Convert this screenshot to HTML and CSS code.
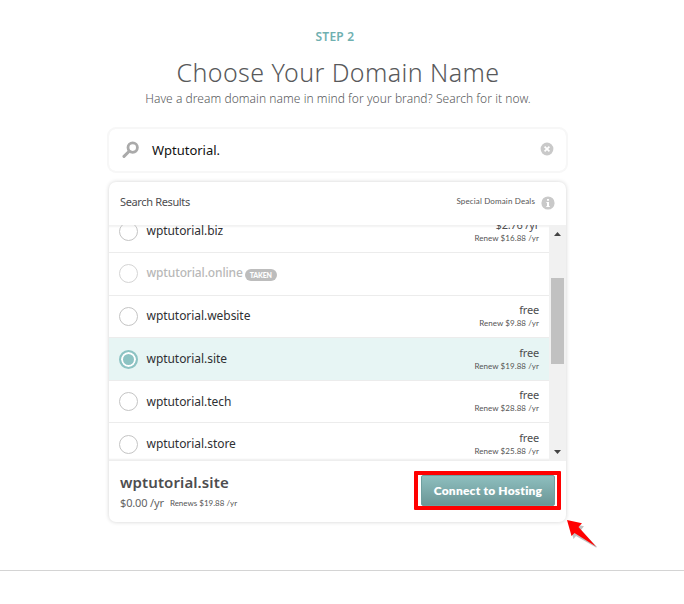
FILE: index.html
```html
<!DOCTYPE html>
<html lang="en">
<head>
<meta charset="utf-8">
<title>Choose Your Domain Name</title>
<link rel="stylesheet" href="styles.css">
</head>
<body>
<main class="page">
  <header class="intro">
    <p class="step"><span>STEP 2</span></p>
    <h1><span>Choose Your Domain Name</span></h1>
    <p class="lead"><span>Have a dream domain name in mind for your brand? Search for it now.</span></p>
  </header>
  <div class="search">
    <svg class="lens" width="18" height="18" viewBox="0 0 18 18"><circle cx="10.7" cy="6.6" r="4.7" fill="none" stroke="#aaa" stroke-width="2.8"/><path d="M7.2 10.2 2 15.4" stroke="#aaa" stroke-width="3" stroke-linecap="round"/></svg>
    <span class="query">Wptutorial.</span>
    <svg class="clear" width="14" height="14" viewBox="0 0 14 14"><circle cx="7" cy="7" r="6.4" fill="#c9c9c9"/><path d="M4.6 4.6 9.4 9.4M9.4 4.6 4.6 9.4" stroke="#fff" stroke-width="1.7"/></svg>
  </div>
  <section class="card">
    <div class="card-head">
      <span class="results">Search Results</span>
      <span class="deals">Special Domain Deals</span>
      <svg class="info" width="14" height="14" viewBox="0 0 14 14"><circle cx="7" cy="7" r="6.6" fill="#c9c9c9"/><path d="M6 3h2v1.8H6zM5.4 6H8v4h.8v1H5.3v-1H6V7h-.6z" fill="#fff"/></svg>
    </div>
    <div class="list">
      <div class="rows">
        <div class="row"><i class="radio"></i><span class="name">wptutorial.biz</span><div class="price"><b>$2.76 /yr</b><small>Renew $16.88 /yr</small></div></div>
        <div class="row taken"><i class="radio"></i><span class="name">wptutorial.online</span><span class="tag">TAKEN</span></div>
        <div class="row"><i class="radio"></i><span class="name">wptutorial.website</span><div class="price"><b>free</b><small>Renew $9.88 /yr</small></div></div>
        <div class="row selected"><i class="radio"></i><span class="name">wptutorial.site</span><div class="price"><b>free</b><small>Renew $19.88 /yr</small></div></div>
        <div class="row"><i class="radio"></i><span class="name">wptutorial.tech</span><div class="price"><b>free</b><small>Renew $28.88 /yr</small></div></div>
        <div class="row"><i class="radio"></i><span class="name">wptutorial.store</span><div class="price"><b>free</b><small>Renew $25.88 /yr</small></div></div>
      </div>
      <div class="scrollbar">
        <svg width="7" height="4" viewBox="0 0 7 4"><path d="M0 4 3.5 0 7 4z" fill="#444"/></svg>
        <div class="track"><div class="thumb"></div></div>
        <svg width="7" height="4" viewBox="0 0 7 4"><path d="M0 0h7L3.5 4z" fill="#444"/></svg>
      </div>
    </div>
    <div class="card-foot">
      <div class="summary">
        <strong>wptutorial.site</strong>
        <div class="cost"><span class="total">$0.00 /yr</span><span class="renews">Renews $19.88 /yr</span></div>
      </div>
      <div class="highlight"><button class="connect" type="button">Connect to Hosting</button></div>
    </div>
    <svg class="arrow" width="36" height="34" viewBox="0 0 36 34"><path d="M3 4 18 7.2 15 11 31 28 30 28.5 10 17 7.5 20z" fill="#777" opacity=".45"/><path d="M1 1 16 4.2 12.5 8 30 27.5 8.5 14 5.5 17z" fill="red"/></svg>
  </section>
</main>
<hr class="rule">
</body>
</html>
```
FILE: styles.css
```css
* { box-sizing: border-box; }
body { margin: 0; height: 604px; overflow: hidden; background: #fff; font-family: Lato, "Noto Sans", sans-serif; color: #4d4d4f; }
.page { width: 458px; height: 570px; margin: 0 0 0 109px; }
.intro { height: 129px; padding-top: 27px; text-align: center; white-space: nowrap; }
.intro p, .intro h1 { margin: 0; }
.step { height: 20px; margin-left: -6px !important; font: 600 12px/19px "Noto Sans", sans-serif; color: #6fb0b0; letter-spacing: .25px; }
.intro h1 { height: 40px; margin-top: 5px; font: 300 25px/40px "Noto Sans", sans-serif; letter-spacing: .42px; color: #58595b; }
.lead { height: 18px; margin-top: -2px !important; font: 300 12px/18px "Noto Sans", sans-serif; letter-spacing: .05px; color: #58595b; }
.search { display: flex; align-items: center; width: 457px; height: 42px; padding: 0 12px 0 13px; border-radius: 7px; box-shadow: 0 0 0 2px #f7f7f7, 0 0 3px #eee; }
.query { margin: -1px 0 0 12px; flex: 1; font: 400 13px/20px "Noto Sans", sans-serif; color: #111; }
.clear { margin-top: -2px; }
.card { position: relative; width: 457px; height: 340px; margin-top: 11px; border-radius: 7px; box-shadow: 0 0 4px rgba(0,0,0,.18); background: #fff; }
.card-head { display: flex; align-items: center; height: 43px; padding: 0 11px; }
.results { flex: 1; font: 400 11px/20px "Noto Sans", sans-serif; letter-spacing: -.36px; margin-top: -3px; }
.deals { font-size: 8px; letter-spacing: .14px; margin: -5px 6px 0 0; color: #555; }
.info { margin-top: -1px; }
.list { display: flex; height: 236px; overflow: hidden; box-shadow: inset 0 3px 2px -1px #f2f2f2, inset 0 -3px 2px -1px #eee; }
.rows { width: 440px; margin-top: -14.5px; }
.row { display: flex; align-items: center; height: 42.6px; padding: 0 10px 0 9.5px; border-bottom: 1px solid #ececec; }
.radio { flex: none; width: 19px; height: 19px; border: 1.5px solid #c4c4c4; border-radius: 50%; }
.name { margin: 0 0 0 9px; font: 400 12px/20px "Noto Sans", sans-serif; letter-spacing: -.05px; color: #2f3033; }
.taken .radio { border-color: #d4d4d4; }
.taken .name { margin-top: -1px; font-weight: 500; letter-spacing: -.14px; color: #b8b8b8; }
.tag { width: 32px; height: 12px; margin: 3px 0 0 2px; border-radius: 6px; background: #bdbdbd; color: #fff; font-size: 7px; line-height: 12px; font-weight: 900; text-align: center; letter-spacing: -.2px; }
.selected { background: #e7f5f4; }
.selected .radio { border: 2px solid #8dc3c3; background: #8dc3c3; box-shadow: inset 0 0 0 2px #fff; }
.price { margin-left: auto; text-align: right; }
.price b { display: block; font: 400 11px/14px "Noto Sans", sans-serif; letter-spacing: -.2px; color: #4d4d4f; }
.price small { display: block; font-size: 8px; line-height: 13px; letter-spacing: .06px; color: #555; }
.scrollbar { display: flex; flex-direction: column; align-items: center; width: 17px; padding: 7px 0; background: #f1f1f1; }
.track { flex: 1; width: 13px; padding-top: 42px; }
.thumb { height: 86px; background: #c1c1c1; }
.card-foot { display: flex; height: 61px; padding: 10px 5px 0 11px; }
.summary { flex: 1; white-space: nowrap; }
.summary strong { display: block; width: max-content; font: 600 15px/23px "Noto Sans", sans-serif; letter-spacing: .1px; }
.cost { display: flex; align-items: center; height: 17px; }
.total { font: 400 11px/17px "Noto Sans", sans-serif; letter-spacing: -.15px; color: #636363; }
.renews { margin-left: 6px; font-size: 8px; color: #555; }
.highlight { width: 147px; height: 39px; border: 4px solid red; border-radius: 1px; padding: 0 2px 0 3px; }
.connect { display: block; width: 134px; height: 31px; padding: 0; border: 1px solid #6f9f9f; border-radius: 2px; background: linear-gradient(#8ebfbf, #6b9696); color: #fff; font: 800 12px/28px Lato, sans-serif; letter-spacing: .2px; white-space: nowrap; }
.arrow { position: absolute; left: 457px; top: 337px; }
.rule { height: 1px; margin: 0; border: 0; background: #d4d4d4; }
```
